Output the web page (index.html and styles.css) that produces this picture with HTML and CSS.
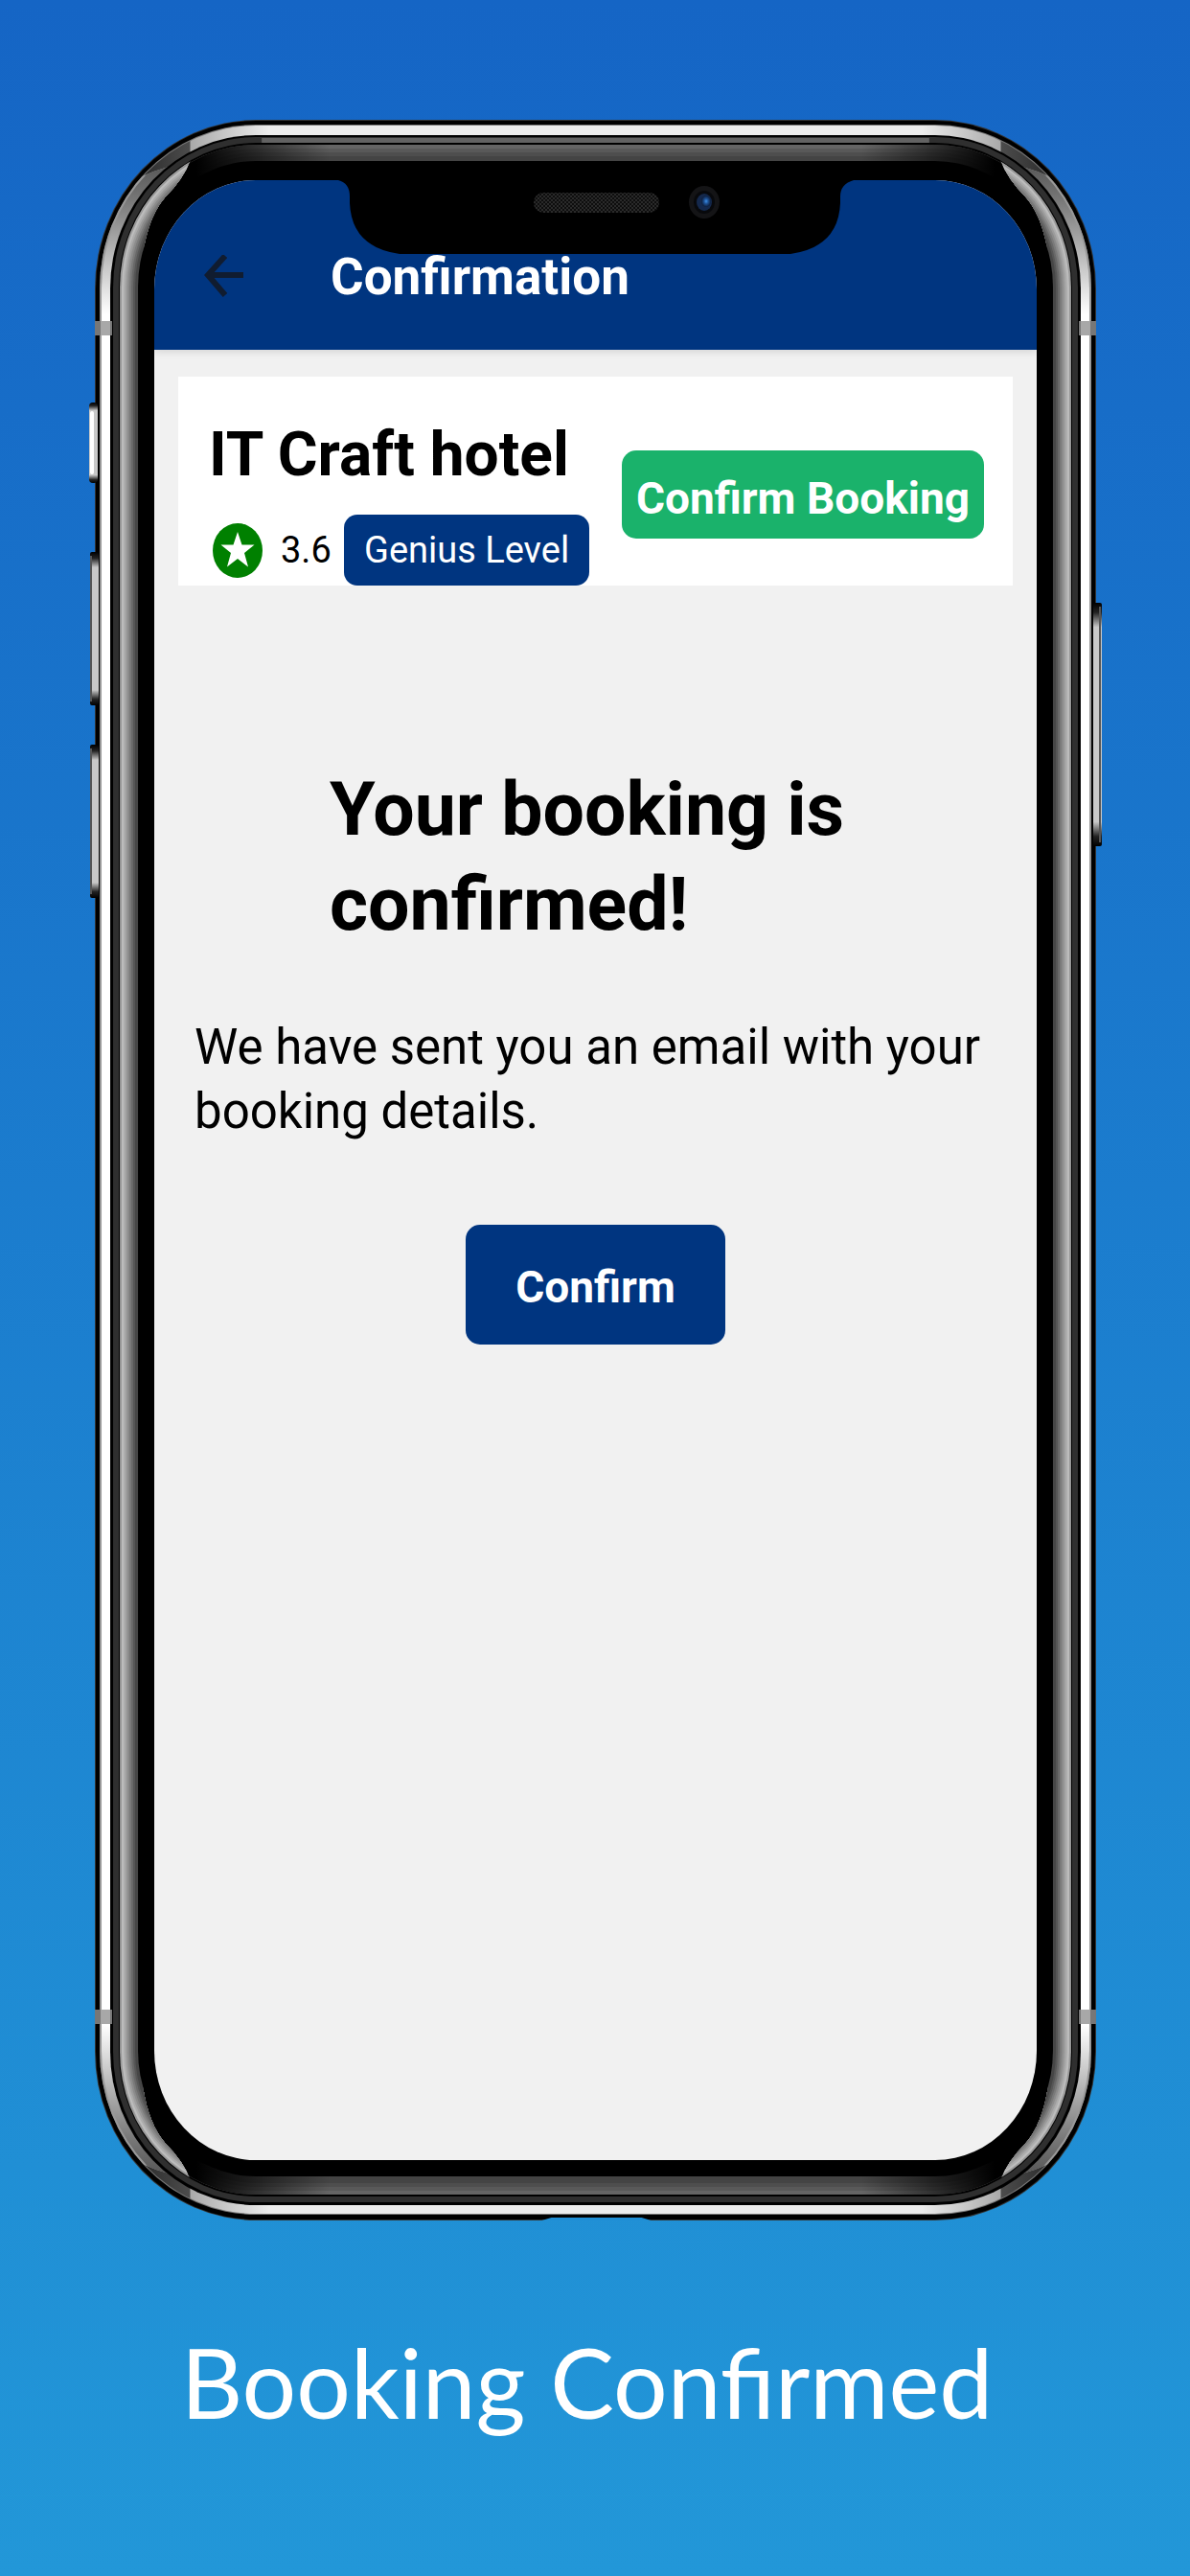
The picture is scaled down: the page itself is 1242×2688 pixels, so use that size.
FILE: index.html
```html
<!DOCTYPE html>
<html lang="en">
<head>
<meta charset="utf-8">
<meta name="viewport" content="width=device-width, initial-scale=1">
<title>Booking Confirmed</title>
<link rel="stylesheet" href="styles.css">
</head>
<body>
<main class="poster">
  <div class="phone">
    <svg class="frame" viewBox="0 0 1056 2192" preserveAspectRatio="none" aria-hidden="true">
      <defs>
        <linearGradient id="endSteel" x1="0" y1="0" x2="1" y2="0">
          <stop offset="0" stop-color="#111"/><stop offset=".09" stop-color="#4c4c4c"/>
          <stop offset=".091" stop-color="#aaa"/><stop offset=".17" stop-color="#ececec"/>
          <stop offset=".83" stop-color="#ececec"/><stop offset=".909" stop-color="#aaa"/>
          <stop offset=".91" stop-color="#4c4c4c"/><stop offset="1" stop-color="#111"/>
        </linearGradient>
        <linearGradient id="sideSteel" x1="0" y1="0" x2="0" y2="1">
          <stop offset="0" stop-color="#333"/><stop offset=".035" stop-color="#777"/>
          <stop offset=".09" stop-color="#fff"/><stop offset=".91" stop-color="#fff"/>
          <stop offset=".965" stop-color="#777"/><stop offset="1" stop-color="#333"/>
        </linearGradient>
        <linearGradient id="endShade" x1="0" y1="0" x2="1" y2="0">
          <stop offset=".08" stop-color="#000"/><stop offset=".14" stop-color="#000" stop-opacity=".55"/>
          <stop offset=".22" stop-color="#000" stop-opacity="0"/><stop offset=".78" stop-color="#000" stop-opacity="0"/>
          <stop offset=".86" stop-color="#000" stop-opacity=".55"/><stop offset=".92" stop-color="#000"/>
        </linearGradient>
        <linearGradient id="key" x1="0" y1="0" x2="0" y2="1">
          <stop offset="0" stop-color="#000"/><stop offset=".04" stop-color="#222"/><stop offset=".1" stop-color="#c8c8c8"/>
          <stop offset=".9" stop-color="#c8c8c8"/><stop offset=".96" stop-color="#222"/><stop offset="1" stop-color="#000"/>
        </linearGradient>
        <radialGradient id="lens">
          <stop offset="0" stop-color="#3c8fe6"/><stop offset=".45" stop-color="#1d4f92"/><stop offset="1" stop-color="#0c1c38"/>
        </radialGradient>
        <pattern id="mesh" width="4" height="4" patternUnits="userSpaceOnUse">
          <rect width="4" height="4" fill="#2a2a2a"/><rect width="2" height="2" fill="#0e0e0e"/><rect x="2" y="2" width="2" height="2" fill="#0e0e0e"/>
        </pattern>
        <clipPath id="sides"><path d="M0 0L60 0L52 75Q80 62 106 42Q98 62 80 80Q62 100 56 140L56 2052Q62 2092 80 2112Q98 2130 106 2150Q80 2130 52 2117L60 2192L0 2192ZM1056 0L996 0L1004 75Q976 62 950 42Q958 62 976 80Q994 100 1000 140L1000 2052Q994 2092 976 2112Q958 2130 950 2150Q976 2130 1004 2117L996 2192L1056 2192Z"/></clipPath>
        <clipPath id="steelSides"><path d="M0 0L24 76Q50 58 86 48L60 110L60 2082L86 2144Q50 2134 24 2116L0 2192ZM1056 0L1032 76Q1006 58 970 48L996 110L996 2082L970 2144Q1006 2134 1032 2116L1056 2192Z"/></clipPath>
      </defs>

      <!-- steel band -->
      <rect x="6" y="0" width="1044" height="2192" rx="168" ry="176" fill="#333"/>
      <rect x="7" y="1" width="1042" height="2190" rx="167" ry="175" fill="#000"/>
      <rect x="11" y="5" width="1034" height="2181" rx="163" ry="171" fill="#777"/>
      <rect x="12" y="6" width="1032" height="2179" rx="162" ry="170" fill="url(#endSteel)"/>
      <g clip-path="url(#steelSides)">
        <rect x="11" y="5" width="1034" height="2181" rx="163" ry="171" fill="#999"/>
        <rect x="13" y="7" width="1030" height="2177" rx="161" ry="169" fill="url(#sideSteel)"/>
      </g>
      <rect x="22" y="16" width="1012" height="2160" rx="152" ry="160" fill="#000"/>
      <rect x="25" y="18" width="1006" height="2155" rx="149" ry="157" fill="#2f2f2f"/>
      <path d="M180 21.500H876" stroke="#626262" stroke-width="5"/>
      <rect x="31" y="24" width="994" height="2143" rx="143" ry="151" fill="#000"/>

      <!-- side keys -->
      <rect x="0" y="295" width="9" height="84" rx="4" fill="url(#key)"/>
      <rect x="1" y="304" width="4" height="66" rx="2" fill="#fff"/>
      <rect x="1" y="451" width="9" height="160" rx="2" fill="url(#key)"/>
      <rect x="1" y="455" width="2" height="152" fill="#555"/>
      <rect x="1" y="652" width="9" height="160" rx="2" fill="url(#key)"/>
      <rect x="1" y="656" width="2" height="152" fill="#555"/>
      <rect x="1047" y="504" width="9" height="254" rx="2" fill="url(#key)"/>
      <rect x="1053" y="508" width="2" height="246" fill="#555"/>

      <!-- bezel, ends -->
      <rect x="33" y="26" width="990" height="2139" rx="141" ry="149" fill="#656565"/>
      <rect x="36" y="30" width="984" height="2131" rx="138" ry="145" fill="#595959"/>
      <rect x="40" y="34" width="976" height="2123" rx="134" ry="141" fill="#4e4e4e"/>
      <rect x="44" y="38" width="968" height="2115" rx="130" ry="137" fill="#444"/>
      <rect x="33" y="26" width="990" height="2139" rx="141" ry="149" fill="url(#endShade)"/>
      <!-- bezel, sides -->
      <g clip-path="url(#sides)">
        <rect x="32" y="25" width="992" height="2141" rx="142" ry="150" fill="#999"/>
        <rect x="34" y="27" width="988" height="2137" rx="140" ry="148" fill="#bdbdbd"/>
        <rect x="36" y="29" width="984" height="2133" rx="138" ry="146" fill="#adadad"/>
        <rect x="38" y="31" width="980" height="2129" rx="136" ry="144" fill="#9c9c9c"/>
        <rect x="40" y="33" width="976" height="2125" rx="134" ry="142" fill="#8b8b8b"/>
        <rect x="42" y="35" width="972" height="2121" rx="132" ry="140" fill="#7a7a7a"/>
        <rect x="44" y="37" width="968" height="2117" rx="130" ry="138" fill="#686868"/>
        <rect x="46" y="39" width="964" height="2113" rx="128" ry="136" fill="#565656"/>
        <rect x="48" y="41" width="960" height="2109" rx="126" ry="134" fill="#464646"/>
      </g>
      <rect x="51" y="43" width="954" height="2103" rx="123" ry="131" fill="#000"/>

      <!-- antenna bands -->
      <g fill="#777">
        <path d="M6 210H24V225H6ZM6 1972H24V1987H6ZM1032 210H1050V225H1032ZM1032 1972H1050V1987H1032Z"/>
        <path fill="#a8a8a8" d="M12 210H22V225H12ZM12 1972H22V1987H12ZM1034 210H1044V225H1034ZM1034 1972H1044V1987H1034Z"/>
      </g>
      <path d="M472 2192L482 2189H576L586 2192Z" fill="#1f8ed5"/>
    </svg>

    <div class="screen">
      <header class="appbar">
        <button class="back" type="button" aria-label="Back">
          <svg viewBox="0 0 42 46" fill="none" stroke="#101c30" stroke-width="6"><path d="M41 21H5M22 1L4 21L22 42"/></svg>
        </button>
        <h1 class="title">Confirmation</h1>
      </header>

      <section class="card">
        <div class="hotel">
          <h2 class="name">IT Craft hotel</h2>
          <div class="meta">
            <svg class="star" viewBox="0 0 52 57" aria-hidden="true"><ellipse cx="26" cy="28.500" rx="26" ry="28.500" fill="#008000"/><path fill="#fff" d="M26 9L30.500 22.500H43.500L33 31L37 45.500L26 37L15 45.500L19 31L8.500 22.500H21.500Z"/></svg>
            <span class="score">3.6</span>
            <span class="badge">Genius Level</span>
          </div>
        </div>
        <button class="btn btn-green" type="button">Confirm Booking</button>
      </section>

      <section class="message">
        <h2 class="headline">Your booking is confirmed!</h2>
        <p class="text">We have sent you an email with your booking details.</p>
        <button class="btn btn-blue" type="button">Confirm</button>
      </section>
    </div>

    <svg class="notch" viewBox="0 0 538 77" aria-hidden="true">
      <path d="M0 0Q12 3 12 17V24Q14 70 64 77H472Q522 70 524 24V17Q524 4 538 0Z" fill="#000"/>
      <rect x="204" y="13" width="131" height="21" rx="10" fill="url(#mesh)"/>
      <ellipse cx="382" cy="23" rx="16" ry="17" fill="#141416"/>
      <ellipse cx="382" cy="23" rx="11" ry="12" fill="#08090c"/>
      <ellipse cx="382" cy="23" rx="8" ry="9" fill="#14284c"/>
      <ellipse cx="384" cy="22" rx="5" ry="6" fill="url(#lens)"/>
    </svg>
  </div>
  <p class="caption">Booking Confirmed</p>
</main>
</body>
</html>
```
FILE: styles.css
```css
* {
  box-sizing: border-box;
  margin: 0;
}

body {
  background: #2297d8;
  font-family: Roboto, "Liberation Sans", sans-serif;
  color: #000;
}

.poster {
  display: flex;
  flex-direction: column;
  align-items: center;
  min-height: 100vh;
  padding: 125px 92px 0 93px;
  background: linear-gradient(#1565c5, #2297d8);
}

.phone {
  position: relative;
  display: flex;
  width: 100%;
  max-width: 1057px;
  aspect-ratio: 1057 / 2192;
  padding: 63px 68px;
}

.frame {
  position: absolute;
  inset: 0;
  width: 100%;
  height: 100%;
}

.screen {
  position: relative;
  flex: 1;
  overflow: hidden;
  border-radius: 106px / 114px;
  background: #f1f1f1;
}

.notch {
  position: absolute;
  top: 63px;
  left: 0;
  right: 0;
  width: 538px;
  margin: 0 auto;
}

.appbar {
  display: flex;
  align-items: center;
  gap: 90px;
  padding: 66px 52px 41px;
  background: #003580;
  box-shadow: 0 2px 8px rgba(0, 0, 0, 0.12);
}

.back {
  width: 42px;
  height: 46px;
  padding: 0;
  border: 0;
  background: none;
}

.back svg {
  display: block;
}

.title {
  color: #fff;
  font-size: 53px;
  line-height: 70px;
}

.card {
  display: flex;
  justify-content: space-between;
  margin: 28px 25px 0;
  padding: 46px 30px 0 32px;
  background: #fff;
}

.name {
  font-size: 64px;
  line-height: 72px;
}

.meta {
  display: flex;
  align-items: center;
  margin-top: 26px;
  padding-left: 4px;
}

.star {
  width: 52px;
  height: 57px;
}

.score {
  width: 85px;
  padding-left: 19px;
  font-size: 38px;
}

.badge {
  padding: 0 21px;
  border-radius: 14px;
  background: #003580;
  color: #fff;
  font-size: 38px;
  line-height: 74px;
}

.btn {
  border: 0;
  border-radius: 15px;
  color: #fff;
  font-family: inherit;
  font-size: 46px;
  font-weight: 700;
}

.btn-green {
  align-self: flex-end;
  margin-bottom: 49px;
  padding: 8px 15px 0;
  line-height: 84px;
  background: #1ab26b;
}

.btn-blue {
  display: block;
  margin: 85px auto 0;
  padding: 5px 52px 0;
  line-height: 120px;
  background: #003580;
}

.message {
  padding: 185px 42px 0;
}

.headline {
  max-width: 700px;
  padding-left: 141px;
  font-size: 77px;
  line-height: 99px;
}

.text {
  margin-top: 65px;
  font-size: 51px;
  line-height: 67px;
}

.caption {
  padding: 108px 18px 100px 0;
  color: #fff;
  font-family: Lato, sans-serif;
  font-size: 100px;
  line-height: 120px;
  text-align: center;
}
```
